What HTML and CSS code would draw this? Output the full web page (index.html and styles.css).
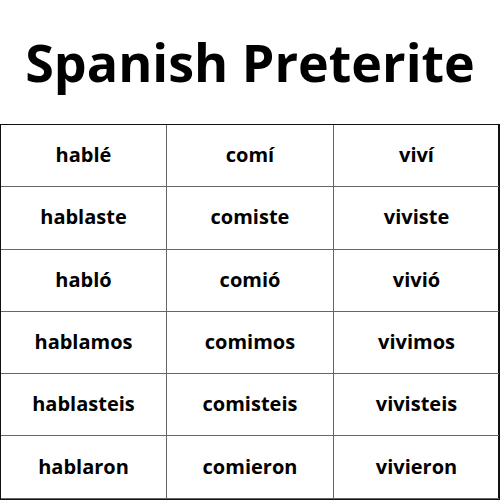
FILE: index.html
```html
<!DOCTYPE html>
<html>
<head>
<meta charset="utf-8">
<link rel="stylesheet" href="styles.css">
</head>
<body>
<h1 class="title">Spanish Preterite</h1>
<div class="grid">
  <div class="cell">hablé</div><div class="cell">comí</div><div class="cell">viví</div>
  <div class="cell">hablaste</div><div class="cell">comiste</div><div class="cell">viviste</div>
  <div class="cell">habló</div><div class="cell">comió</div><div class="cell">vivió</div>
  <div class="cell">hablamos</div><div class="cell">comimos</div><div class="cell">vivimos</div>
  <div class="cell">hablasteis</div><div class="cell">comisteis</div><div class="cell">vivisteis</div>
  <div class="cell">hablaron</div><div class="cell">comieron</div><div class="cell">vivieron</div>
</div>
</body>
</html>
```
FILE: styles.css
```css
html, body { margin: 0; padding: 0; background: #fff; }
body { width: 500px; height: 500px; overflow: hidden; font-family: "Open Sans", sans-serif; color: #000; }
.title {
  margin: 0;
  height: 124px;
  display: flex;
  align-items: center;
  justify-content: center;
  font-size: 52px;
  font-weight: 700;
  padding-bottom: 2px;
  box-sizing: border-box;
}
.grid {
  width: 500px;
  display: grid;
  grid-template-columns: 166px 167px 165px;
  grid-auto-rows: 62.3px;
  border: 1.5px solid #111;
  border-right-width: 2px;
  box-sizing: border-box;
}
.cell {
  display: flex;
  align-items: center;
  justify-content: center;
  font-size: 20px;
  font-weight: 700;
  padding-bottom: 2px;
  border-right: 1px solid #666;
  border-bottom: 1px solid #666;
}
.cell:nth-child(3n) { border-right: none; }
```
